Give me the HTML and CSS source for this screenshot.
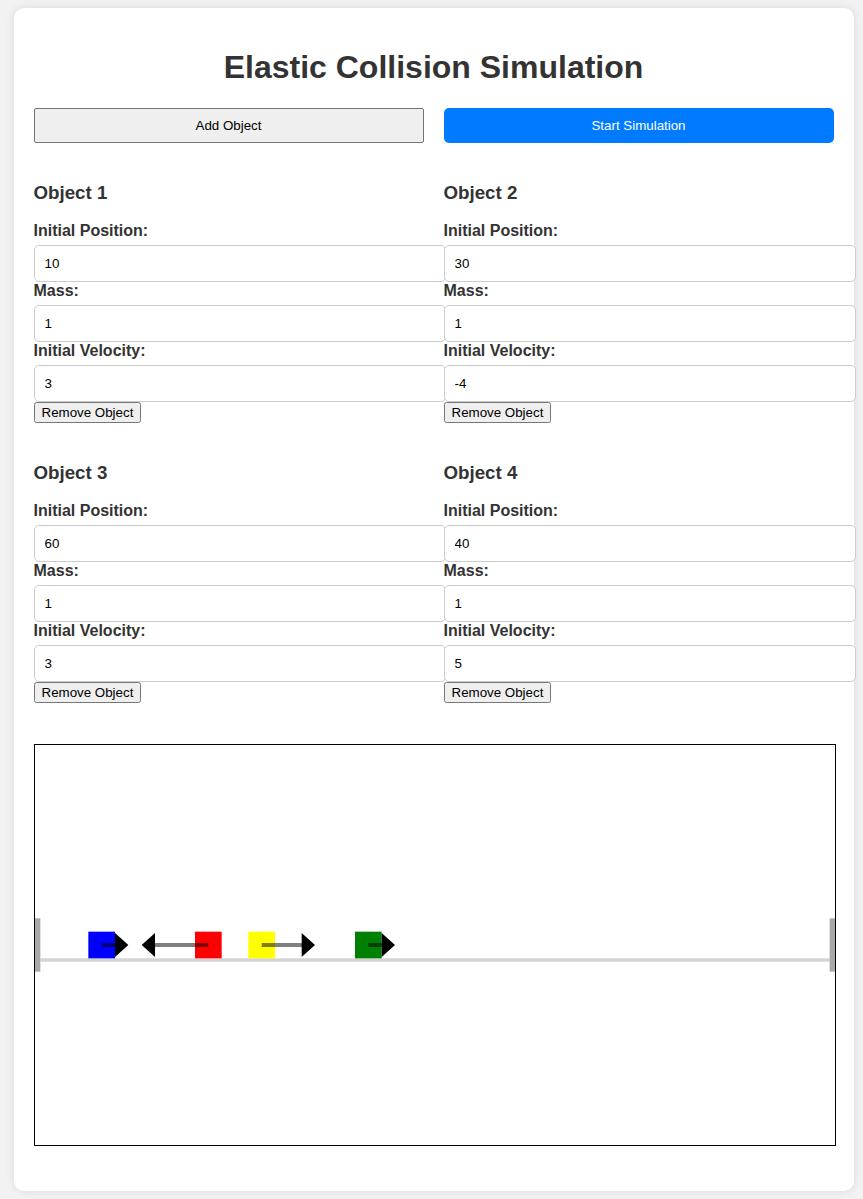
FILE: index.html
```html
<!DOCTYPE html>
<html lang="en">
<head>
<meta charset="utf-8">
<title>Elastic Collision Simulation</title>
<link rel="stylesheet" href="styles.css">
</head>
<body>
<div class="container">
  <h1>Elastic Collision Simulation</h1>
  <div class="controls">
    <button class="btn btn-add">Add Object</button>
    <button class="btn btn-start">Start Simulation</button>
  </div>
  <div class="objects">
    <div class="obj">
      <h3>Object 1</h3>
      <label>Initial Position:</label>
      <input type="number" value="10">
      <label>Mass:</label>
      <input type="number" value="1">
      <label>Initial Velocity:</label>
      <input type="number" value="3">
      <button class="remove">Remove Object</button>
    </div>
    <div class="obj">
      <h3>Object 2</h3>
      <label>Initial Position:</label>
      <input type="number" value="30">
      <label>Mass:</label>
      <input type="number" value="1">
      <label>Initial Velocity:</label>
      <input type="number" value="-4">
      <button class="remove">Remove Object</button>
    </div>
    <div class="obj">
      <h3>Object 3</h3>
      <label>Initial Position:</label>
      <input type="number" value="60">
      <label>Mass:</label>
      <input type="number" value="1">
      <label>Initial Velocity:</label>
      <input type="number" value="3">
      <button class="remove">Remove Object</button>
    </div>
    <div class="obj">
      <h3>Object 4</h3>
      <label>Initial Position:</label>
      <input type="number" value="40">
      <label>Mass:</label>
      <input type="number" value="1">
      <label>Initial Velocity:</label>
      <input type="number" value="5">
      <button class="remove">Remove Object</button>
    </div>
  </div>
  <svg class="sim" viewBox="0 0 600 300" preserveAspectRatio="none" width="800" height="400">
    <rect x="4" y="160" width="592" height="2.5" fill="#d3d3d3"/>
    <rect x="0" y="130" width="4" height="40" fill="#a9a9a9"/>
    <rect x="596" y="130" width="4" height="40" fill="#a9a9a9"/>

    <rect x="40" y="140" width="20" height="20" fill="#0000ff"/>
    <line x1="50" y1="150" x2="61" y2="150" stroke="rgba(0,0,0,0.5)" stroke-width="3"/>
    <polygon points="60,141 70,150 60,159" fill="#000"/>

    <rect x="120" y="140" width="20" height="20" fill="#ff0000"/>
    <line x1="130" y1="150" x2="89" y2="150" stroke="rgba(0,0,0,0.5)" stroke-width="3"/>
    <polygon points="90,141 80,150 90,159" fill="#000"/>

    <rect x="160" y="140" width="20" height="20" fill="#ffff00"/>
    <line x1="170" y1="150" x2="201" y2="150" stroke="rgba(0,0,0,0.5)" stroke-width="3"/>
    <polygon points="200,141 210,150 200,159" fill="#000"/>

    <rect x="240" y="140" width="20" height="20" fill="#008000"/>
    <line x1="250" y1="150" x2="261" y2="150" stroke="rgba(0,0,0,0.5)" stroke-width="3"/>
    <polygon points="260,141 270,150 260,159" fill="#000"/>
  </svg>
</div>
</body>
</html>
```
FILE: styles.css
```css
html, body {
  margin: 0;
  padding: 0;
}

body {
  background: #f2f2f2;
  font-family: "Liberation Sans", Arial, Helvetica, sans-serif;
  color: #333;
  font-size: 16px;
}

.container {
  width: 800px;
  padding: 20px;
  margin: 8px 0 8px 13.5px;
  background: #fff;
  border-radius: 10px;
  box-shadow: 0 0 10px rgba(0, 0, 0, 0.1);
}

h1 {
  text-align: center;
  font-size: 32px;
  margin: 21px 0 21.5px;
  color: #333;
}

.controls {
  display: grid;
  grid-template-columns: 1fr 1fr;
  gap: 20px;
}

.btn {
  font-family: "Liberation Sans", Arial, sans-serif;
  font-size: 13.33px;
  padding: 10px;
  height: 35px;
  line-height: 13px;
  cursor: pointer;
}

.btn-add {
  background: #efefef;
  border: 1px solid #767676;
  border-radius: 2px;
  color: #000;
}

.btn-start {
  background: #007bff;
  border: none;
  border-radius: 5px;
  color: #fff;
}

.objects {
  display: grid;
  grid-template-columns: 390px 390px;
  column-gap: 20px;
  row-gap: 20px;
  margin-top: 20px;
}

.obj h3 {
  font-size: 18.72px;
  margin: 19px 0 18px;
  color: #333;
}

.obj label {
  display: block;
  font-weight: bold;
  margin-bottom: 5px;
  color: #333;
}

.obj input {
  display: block;
  width: 100%;
  height: 15px;
  padding: 10px;
  border: 1px solid #ccc;
  border-radius: 5px;
  font-family: "Liberation Sans", Arial, sans-serif;
  font-size: 13.33px;
  color: #000;
  background: #fff;
  margin: 0;
}

.remove {
  font-family: "Liberation Sans", Arial, sans-serif;
  font-size: 13.33px;
  margin: 0;
}

.sim {
  display: block;
  width: 800px;
  height: 400px;
  border: 1px solid #000;
  margin: 41px 0 25px;
  background: #fff;
}
```
